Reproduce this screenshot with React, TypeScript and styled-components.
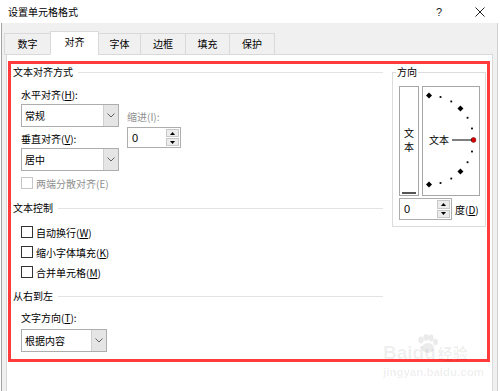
import React from 'react';
import styled, { createGlobalStyle } from 'styled-components';

const GlobalStyle = createGlobalStyle`
  html, body {
    margin: 0;
    padding: 0;
    background: #fff;
  }
  body {
    font-family: "Noto Sans CJK SC", "Microsoft YaHei", sans-serif;
    font-size: 10px;
    color: #000;
  }
  #root {
    width: 500px;
    height: 391px;
    overflow: hidden;
  }
`;

const Window = styled.div`
  position: relative;
  width: 500px;
  height: 391px;
  display: flex;
  flex-direction: column;
  overflow: hidden;
`;

const TitleBar = styled.div`
  height: 23px;
  flex-shrink: 0;
  display: flex;
  align-items: center;
  padding-left: 8px;
  background: #fff;
`;

const Title = styled.span`
  flex: 1;
  font-size: 10px;
  line-height: 14px;
`;

const Help = styled.span`
  width: 10px;
  margin-right: 29px;
  font-family: "Liberation Sans", sans-serif;
  font-size: 11px;
  color: #222;
`;

const CloseIcon = styled.svg`
  margin-right: 15px;
`;

const Body = styled.div`
  flex: 1;
  margin: 0 2px 0 1px;
  border-left: 1px solid #a3a3a3;
  border-right: 1px solid #cfcfcf;
  background: #f0f0f0;
  display: flex;
  flex-direction: column;
`;

const TabStrip = styled.div`
  display: flex;
  align-items: flex-end;
  height: 32px;
  padding-left: 1px;
  position: relative;
  z-index: 1;
`;

const Tab = styled.div<{ $w: number; $active?: boolean }>`
  width: ${p => p.$w}px;
  height: ${p => (p.$active ? 24 : 22)}px;
  box-sizing: border-box;
  margin-left: -1px;
  border: 1px solid #d9d9d9;
  border-bottom: ${p => (p.$active ? '1px solid #fff' : '1px solid #d9d9d9')};
  background: ${p => (p.$active ? '#fff' : '#f0f0f0')};
  display: flex;
  align-items: center;
  justify-content: center;
  line-height: 14px;
  padding-bottom: ${p => (p.$active ? 2 : 1)}px;
  &:first-child {
    margin-left: 1px;
  }
`;

const Panel = styled.div`
  flex: 1;
  margin: -1px 4px 0 4px;
  border: 1px solid #d9d9d9;
  border-bottom: none;
  background: #fff;
  padding: 6px 2px 0 1px;
`;

const RedBox = styled.div`
  height: 295px;
  border: 3px solid #ff3b3b;
  display: flex;
  padding: 0 1px 0 2px;
`;

const LeftColumn = styled.div`
  width: 370px;
  margin-right: 9px;
  display: flex;
  flex-direction: column;
`;

const SectionHeader = styled.div<{ $gap?: number }>`
  display: flex;
  align-items: center;
  height: 16px;
  line-height: 16px;
  margin-top: ${p => p.$gap ?? 0}px;
`;

const Rule = styled.div`
  flex: 1;
  height: 1px;
  margin-left: 5px;
  background: #e3e3e3;
`;

const AlignArea = styled.div`
  display: flex;
  margin-top: 7px;
  padding-left: 8px;
`;

const Stack = styled.div<{ $top?: number; $left?: number }>`
  display: flex;
  flex-direction: column;
  margin-top: ${p => p.$top ?? 0}px;
  margin-left: ${p => p.$left ?? 0}px;
`;

const Label = styled.div<{ $gap?: number; $disabled?: boolean }>`
  height: 16px;
  line-height: 16px;
  margin-top: ${p => p.$gap ?? 0}px;
  color: ${p => (p.$disabled ? '#8f8f8f' : '#000')};
  white-space: nowrap;
`;

const Indented = styled.div`
  padding-left: 8px;
  display: flex;
  flex-direction: column;
`;

const SelectBox = styled.div<{ $w: number; $gap?: number }>`
  width: ${p => p.$w}px;
  height: 23px;
  box-sizing: border-box;
  margin-top: ${p => p.$gap ?? 0}px;
  border: 1px solid #adadad;
  display: flex;
  background: #fff;
`;

const SelectValue = styled.div`
  flex: 1;
  display: flex;
  align-items: center;
  padding-left: 3px;
`;

const SelectArrow = styled.div`
  width: 14px;
  background: #e5e5e5;
  border-left: 1px solid #cfcfcf;
  display: flex;
  align-items: center;
  justify-content: center;
`;

const Spin = styled.div<{ $w: number; $h: number; $gap?: number }>`
  width: ${p => p.$w}px;
  height: ${p => p.$h}px;
  box-sizing: border-box;
  margin-top: ${p => p.$gap ?? 0}px;
  border: 1px solid #adadad;
  display: flex;
  background: #fff;
`;

const SpinValue = styled.div`
  flex: 1;
  display: flex;
  align-items: center;
  padding-left: 4px;
  font-family: "Liberation Sans", sans-serif;
  font-size: 11px;
`;

const SpinButtons = styled.div`
  width: 13px;
  display: flex;
  flex-direction: column;
  padding: 1px 1px 1px 0;
  gap: 1px;
`;

const SpinButton = styled.div`
  flex: 1;
  background: #ececec;
  border: 1px solid #c8c8c8;
  display: flex;
  align-items: center;
  justify-content: center;
`;

const CheckRow = styled.div<{ $h?: number; $gap?: number; $disabled?: boolean }>`
  display: flex;
  align-items: center;
  height: ${p => p.$h ?? 20}px;
  margin-top: ${p => p.$gap ?? 0}px;
  color: ${p => (p.$disabled ? '#8f8f8f' : '#000')};
`;

const CheckBox = styled.div<{ $disabled?: boolean }>`
  width: 12px;
  height: 12px;
  box-sizing: border-box;
  border: 1px solid ${p => (p.$disabled ? '#c6c6c6' : '#333')};
  background: #fff;
  margin-right: 3px;
`;

const GroupBox = styled.div`
  width: 94px;
  height: 155px;
  box-sizing: border-box;
  margin-top: 8px;
  border: 1px solid #dcdcdc;
  padding-left: 6px;
  display: flex;
  flex-direction: column;
`;

const Legend = styled.div`
  width: fit-content;
  margin: -9px 0 0 -3px;
  padding: 0 1px;
  background: #fff;
  line-height: 16px;
  height: 16px;
`;

const DialRow = styled.div`
  display: flex;
  gap: 3px;
  margin-top: 6px;
`;

const VerticalText = styled.div`
  width: 20px;
  height: 110px;
  box-sizing: border-box;
  border: 1px solid #a6a6a6;
  display: flex;
  flex-direction: column;
  align-items: center;
`;

const Filler = styled.div`
  flex: 1;
`;

const VChar = styled.div`
  line-height: 14px;
  height: 14px;
`;

const VBar = styled.div`
  width: 14px;
  height: 2px;
  background: #555;
  margin-bottom: 1px;
`;

const DialBox = styled.div`
  width: 58px;
  height: 110px;
  box-sizing: border-box;
  border: 1px solid #a6a6a6;
`;

const DegreeRow = styled.div`
  display: flex;
  align-items: center;
  margin-top: 2px;
`;

const DegreeLabel = styled.span`
  margin-left: 3px;
`;

const Watermark = styled.div`
  position: absolute;
  left: 383px;
  top: 334px;
  color: rgba(0, 0, 0, 0.08);
  pointer-events: none;
  display: flex;
  flex-direction: column;
`;

const WmMain = styled.div`
  display: flex;
  align-items: baseline;
  font-family: "Liberation Sans", sans-serif;
  font-weight: bold;
  font-size: 19px;
  line-height: 20px;
  margin-top: 9px;
`;

const WmCn = styled.span`
  font-family: "Noto Sans CJK SC", sans-serif;
  font-size: 15px;
  margin-left: 2px;
`;

const WmUrl = styled.div`
  font-family: "Liberation Sans", sans-serif;
  font-weight: bold;
  font-size: 11.5px;
  line-height: 14px;
  margin-top: 2px;
`;

const WmPaw = styled.svg`
  position: absolute;
  left: 32px;
  top: 0;
`;

const Chevron = () => (
  <svg width="8" height="5" viewBox="0 0 8 5">
    <polyline points="0.5,0.5 4,4 7.5,0.5" fill="none" stroke="#606060" strokeWidth="1" />
  </svg>
);

const Triangle: React.FC<{ up?: boolean }> = ({ up }) => (
  <svg width="5" height="3" viewBox="0 0 5 3">
    <polygon points={up ? '0,3 5,3 2.5,0' : '0,0 5,0 2.5,3'} fill="#000" />
  </svg>
);

const Select: React.FC<{ w: number; value: string; gap?: number }> = ({ w, value, gap }) => (
  <SelectBox $w={w} $gap={gap}>
    <SelectValue>{value}</SelectValue>
    <SelectArrow>
      <Chevron />
    </SelectArrow>
  </SelectBox>
);

const SpinBox: React.FC<{ w: number; h: number; gap?: number }> = ({ w, h, gap }) => (
  <Spin $w={w} $h={h} $gap={gap}>
    <SpinValue>0</SpinValue>
    <SpinButtons>
      <SpinButton>
        <Triangle up />
      </SpinButton>
      <SpinButton>
        <Triangle />
      </SpinButton>
    </SpinButtons>
  </Spin>
);

// orientation dial: half circle of ticks around the left middle of the box
const Dial = () => {
  const cx = 6;
  const cy = 53;
  const r = 44.5;
  const ticks = [];
  for (let a = 90; a >= -90; a -= 15) {
    const rad = (a * Math.PI) / 180;
    const x = cx + r * Math.cos(rad);
    const y = cy - r * Math.sin(rad);
    if (a === 0) {
      ticks.push(<circle key={a} cx={x} cy={y} r={2.4} fill="#e00000" stroke="#600" strokeWidth="0.6" />);
    } else if (a % 45 === 0) {
      ticks.push(
        <polygon
          key={a}
          points={`${x},${y - 3} ${x + 3},${y} ${x},${y + 3} ${x - 3},${y}`}
          fill="#000"
        />
      );
    } else {
      ticks.push(<rect key={a} x={x - 0.9} y={y - 0.9} width={1.8} height={1.8} fill="#000" />);
    }
  }
  return (
    <svg width="56" height="108" viewBox="0 0 56 108">
      {ticks}
      <line x1="29" y1={cy} x2="49" y2={cy} stroke="#000" strokeWidth="1" />
      <text x="6" y="57" fontSize="10" fontFamily='"Noto Sans CJK SC", sans-serif' fill="#000">
        文本
      </text>
    </svg>
  );
};

const tabs = [
  { label: '数字', w: 47 },
  { label: '对齐', w: 49, active: true },
  { label: '字体', w: 43 },
  { label: '边框', w: 46 },
  { label: '填充', w: 45 },
  { label: '保护', w: 46 },
];

const App: React.FC = () => {
  return (
    <>
      <GlobalStyle />
      <Window>
        <TitleBar>
          <Title>设置单元格格式</Title>
          <Help>?</Help>
          <CloseIcon width="10" height="10" viewBox="0 0 10 10">
            <path d="M0.5 0.5 L9.5 9.5 M9.5 0.5 L0.5 9.5" stroke="#222" strokeWidth="1" />
          </CloseIcon>
        </TitleBar>

        <Body>
          <TabStrip>
            {tabs.map(t => (
              <Tab key={t.label} $w={t.w} $active={t.active}>
                {t.label}
              </Tab>
            ))}
          </TabStrip>

          <Panel>
            <RedBox>
              <LeftColumn>
                <SectionHeader>
                  文本对齐方式
                  <Rule />
                </SectionHeader>

                <AlignArea>
                  <Stack>
                    <Label>
                      水平对齐(<u>H</u>):
                    </Label>
                    <Select w={98} value="常规" gap={1} />
                    <Label $gap={4}>
                      垂直对齐(<u>V</u>):
                    </Label>
                    <Select w={98} value="居中" gap={1} />
                  </Stack>
                  <Stack $top={22} $left={8}>
                    <Label $disabled>缩进(I):</Label>
                    <SpinBox w={54} h={21} gap={2} />
                  </Stack>
                </AlignArea>

                <Indented>
                  <CheckRow $h={16} $gap={4} $disabled>
                    <CheckBox $disabled />
                    两端分散对齐(E)
                  </CheckRow>
                </Indented>

                <SectionHeader $gap={9}>
                  文本控制
                  <Rule />
                </SectionHeader>

                <Indented>
                  <CheckRow $gap={6}>
                    <CheckBox />
                    自动换行(<u>W</u>)
                  </CheckRow>
                  <CheckRow>
                    <CheckBox />
                    缩小字体填充(<u>K</u>)
                  </CheckRow>
                  <CheckRow>
                    <CheckBox />
                    合并单元格(<u>M</u>)
                  </CheckRow>
                </Indented>

                <SectionHeader $gap={6}>
                  从右到左
                  <Rule />
                </SectionHeader>

                <Indented>
                  <Label $gap={6}>
                    文字方向(<u>T</u>):
                  </Label>
                  <Select w={86} value="根据内容" gap={3} />
                </Indented>
              </LeftColumn>

              <GroupBox>
                <Legend>方向</Legend>
                <DialRow>
                  <VerticalText>
                    <Filler />
                    <VChar>文</VChar>
                    <VChar>本</VChar>
                    <Filler />
                    <VBar />
                  </VerticalText>
                  <DialBox>
                    <Dial />
                  </DialBox>
                </DialRow>
                <DegreeRow>
                  <SpinBox w={53} h={22} />
                  <DegreeLabel>
                    度(<u>D</u>)
                  </DegreeLabel>
                </DegreeRow>
              </GroupBox>
            </RedBox>
          </Panel>
        </Body>

        <Watermark>
          <WmPaw width="26" height="20" viewBox="0 0 26 20">
            <ellipse cx="6" cy="6" rx="2.6" ry="3.4" fill="rgba(0,0,0,0.08)" />
            <ellipse cx="11" cy="3.5" rx="2.6" ry="3.4" fill="rgba(0,0,0,0.08)" />
            <ellipse cx="16" cy="4" rx="2.6" ry="3.4" fill="rgba(0,0,0,0.08)" />
            <ellipse cx="20.5" cy="8" rx="2.4" ry="3.2" fill="rgba(0,0,0,0.08)" />
            <ellipse cx="13" cy="14" rx="6" ry="5" fill="rgba(0,0,0,0.08)" />
          </WmPaw>
          <WmMain>
            Baidu<WmCn>经验</WmCn>
          </WmMain>
          <WmUrl>jingyan.baidu.com</WmUrl>
        </Watermark>
      </Window>
    </>
  );
};

export default App;
